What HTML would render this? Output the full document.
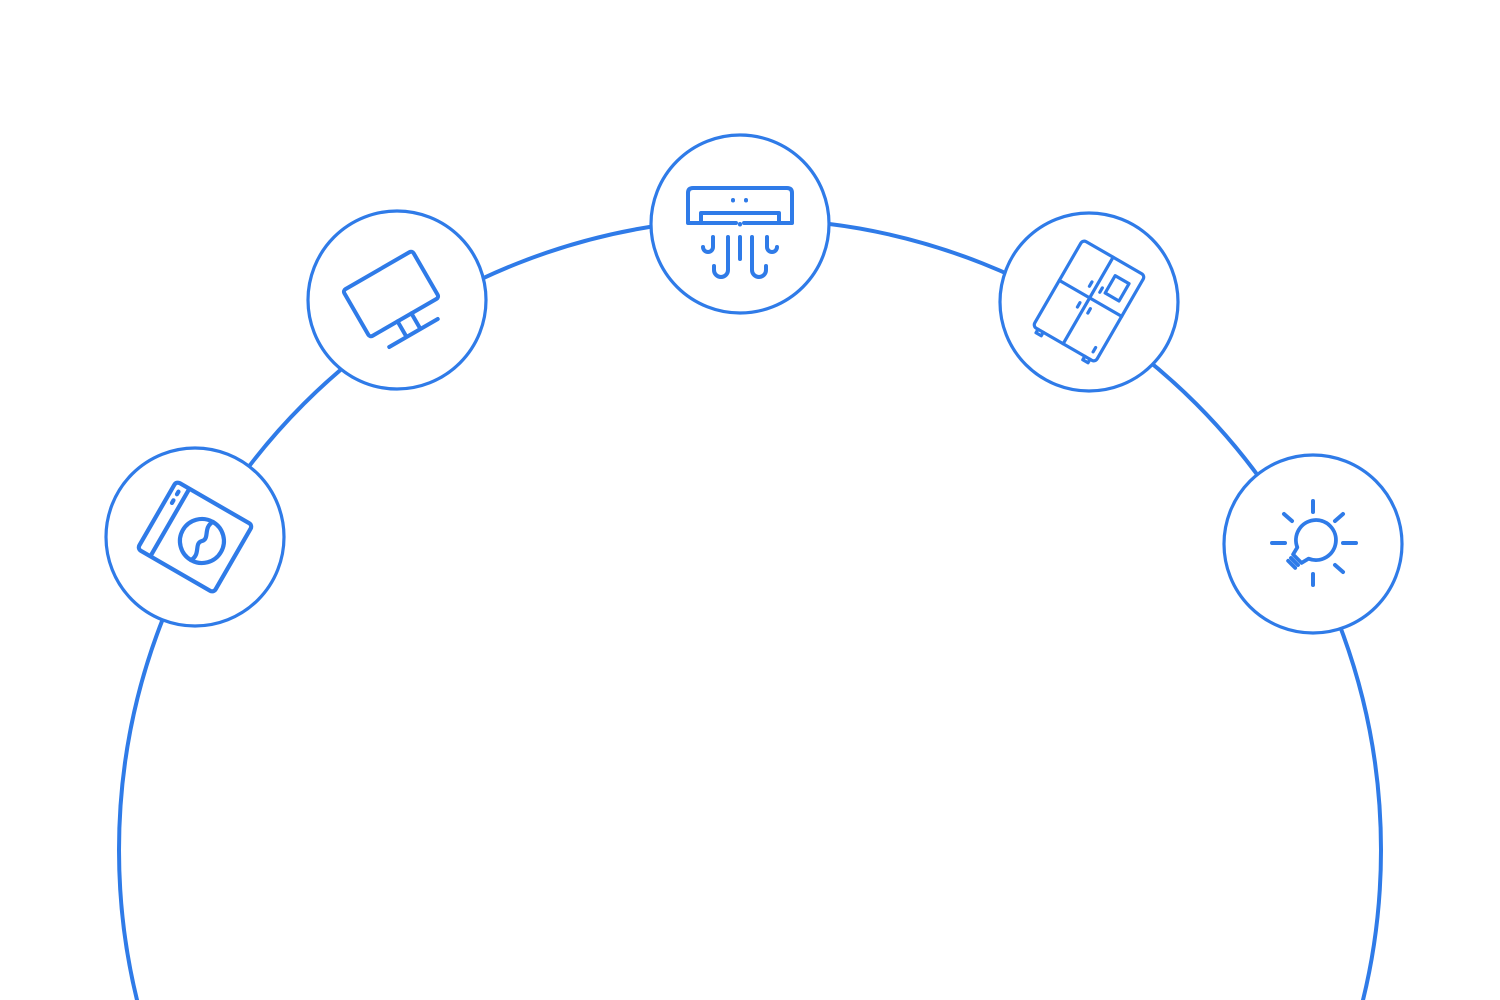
<!DOCTYPE html>
<html><head><meta charset="utf-8"><style>
html,body{margin:0;padding:0;background:#fff;width:1500px;height:1000px;overflow:hidden}
svg{display:block}
</style></head><body>
<svg width="1500" height="1000" viewBox="0 0 1500 1000" xmlns="http://www.w3.org/2000/svg">
<g fill="none" stroke="#2f7be8" stroke-linecap="round" stroke-linejoin="round">
<circle cx="750" cy="850" r="631" stroke-width="4"/>
<g fill="#fff" stroke-width="3.2">
<circle cx="195" cy="537" r="89"/>
<circle cx="397" cy="300" r="89"/>
<circle cx="740" cy="224" r="89"/>
<circle cx="1089" cy="302" r="89"/>
<circle cx="1313" cy="544" r="89"/>
</g>
<!-- washer -->
<g transform="translate(195,537) rotate(30)" stroke-width="4.2">
<rect x="-44" y="-39" width="88" height="78" rx="4"/>
<line x1="-29" y1="-38" x2="-29" y2="38"/>
<line x1="-37" y1="-31" x2="-37" y2="-28"/>
<line x1="-37" y1="-21" x2="-37" y2="-18"/>
<circle cx="8" cy="0" r="22"/>
<path d="M8 -22 C2 -12 14 -6 8 0 C2 6 14 12 8 22"/>
</g>
<!-- monitor -->
<g transform="translate(391,294) rotate(-30)" stroke-width="4">
<rect x="-40" y="-27" width="80" height="54" rx="3"/>
<line x1="-8" y1="27" x2="-8" y2="44"/>
<line x1="8" y1="27" x2="8" y2="44"/>
<line x1="-28" y1="45" x2="28" y2="45"/>
</g>
<!-- AC -->
<g stroke-width="4">
<path d="M736 223 H688 V193 Q688 188 693 188 H787 Q792 188 792 193 V223 H744"/>
<path d="M701 223 V213 H779 V223"/>
<line x1="740" y1="224" x2="740" y2="224.5"/>
<line x1="733" y1="200" x2="733" y2="200.5"/>
<line x1="746" y1="200" x2="746" y2="200.5"/>
<line x1="740" y1="237" x2="740" y2="259"/>
<path d="M713 237 V247 a5 5 0 0 1 -10 0"/>
<path d="M728 237 V270 a7 7 0 0 1 -14 0 V266"/>
<path d="M767 237 V247 a5 5 0 0 0 10 0"/>
<path d="M752 237 V270 a7 7 0 0 0 14 0 V266"/>
</g>
<!-- fridge -->
<g transform="translate(1089,301) rotate(30)" stroke-width="3.2">
<rect x="-36" y="-50" width="72" height="100" rx="4"/>
<line x1="-1" y1="-50" x2="-1" y2="50"/>
<line x1="-36" y1="-3" x2="36" y2="-3"/>
<rect x="10" y="-35" width="16" height="20"/>
<line x1="-7" y1="-18" x2="-7" y2="-13"/>
<line x1="5" y1="-18" x2="5" y2="-13"/>
<line x1="-7" y1="6" x2="-7" y2="11"/>
<line x1="5" y1="6" x2="5" y2="11"/>
<line x1="29" y1="37" x2="29" y2="42"/>
<path d="M-30 50 v4 h6 v-4"/>
<path d="M24 50 v4 h6 v-4"/>
</g>
<!-- bulb -->
<g stroke-width="4">
<line x1="1313" y1="501" x2="1313" y2="512"/>
<line x1="1313" y1="574" x2="1313" y2="585"/>
<line x1="1272" y1="543" x2="1285" y2="543"/>
<line x1="1343" y1="543" x2="1356" y2="543"/>
<line x1="1284" y1="514" x2="1292" y2="521"/>
<line x1="1343" y1="514" x2="1335" y2="521"/>
<line x1="1343" y1="572" x2="1335" y2="565"/>
</g>
<g transform="translate(1315,541) rotate(45)" stroke-width="3.8">
<path d="M-8 17 A20 20 0 1 1 8 17 L6 25 H-6 Z"/>
<line x1="-5" y1="29" x2="5" y2="29"/>
<line x1="-5" y1="33" x2="5" y2="33"/>
</g>
</g>
</svg>
</body></html>
